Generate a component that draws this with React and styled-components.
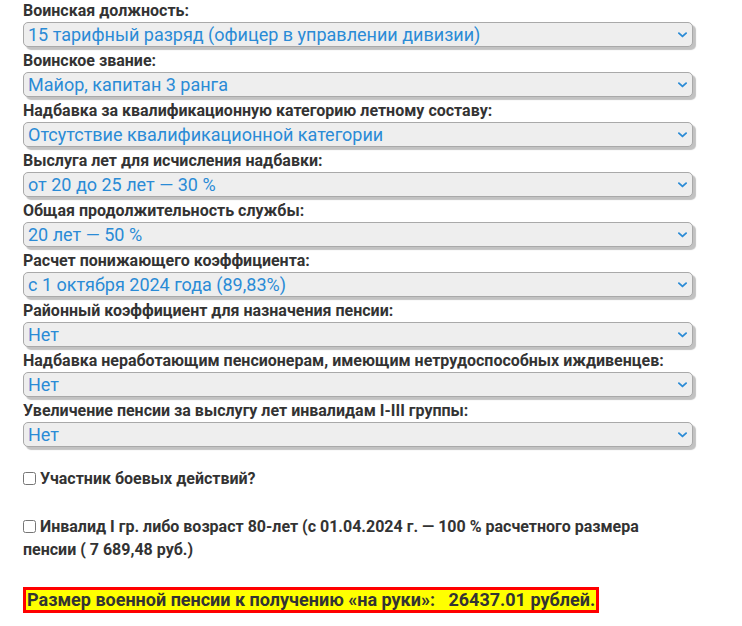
import React, { useState } from 'react';
import styled, { createGlobalStyle } from 'styled-components';

const GlobalStyle = createGlobalStyle`
  body {
    margin: 0;
    background: #fff;
    font-family: Roboto, "Liberation Sans", Arial, sans-serif;
    color: #333;
  }
`;

const fields = [
  {
    label: 'Воинская должность:',
    options: ['15 тарифный разряд (офицер в управлении дивизии)'],
  },
  { label: 'Воинское звание:', options: ['Майор, капитан 3 ранга'] },
  {
    label: 'Надбавка за квалификационную категорию летному составу:',
    options: ['Отсутствие квалификационной категории'],
  },
  {
    label: 'Выслуга лет для исчисления надбавки:',
    options: ['от 20 до 25 лет — 30 %'],
  },
  { label: 'Общая продолжительность службы:', options: ['20 лет — 50 %'] },
  {
    label: 'Расчет понижающего коэффициента:',
    options: ['с 1 октября 2024 года (89,83%)'],
  },
  {
    label: 'Районный коэффициент для назначения пенсии:',
    options: ['Нет'],
  },
  {
    label:
      'Надбавка неработающим пенсионерам, имеющим нетрудоспособных иждивенцев:',
    options: ['Нет'],
  },
  {
    label: 'Увеличение пенсии за выслугу лет инвалидам I-III группы:',
    options: ['Нет'],
  },
];

export default function App() {
  const [combat, setCombat] = useState(false);
  const [invalid, setInvalid] = useState(false);

  return (
    <>
      <GlobalStyle />
      <Form>
        {fields.map(field => (
          <Field key={field.label}>
            <Label>{field.label}</Label>
            <SelectWrap>
              <Select defaultValue={field.options[0]}>
                {field.options.map(opt => (
                  <option key={opt}>{opt}</option>
                ))}
              </Select>
              <Chevron viewBox="0 0 10 6" aria-hidden="true">
                <path
                  d="M1 1 L5 4.6 L9 1"
                  fill="none"
                  stroke="#2a8bd6"
                  strokeWidth="2"
                  strokeLinecap="round"
                  strokeLinejoin="round"
                />
              </Chevron>
            </SelectWrap>
          </Field>
        ))}

        <CheckLine first>
          <Checkbox
            type="checkbox"
            checked={combat}
            onChange={() => setCombat(!combat)}
          />
          Участник боевых действий?
        </CheckLine>

        <CheckLine>
          <Checkbox
            type="checkbox"
            checked={invalid}
            onChange={() => setInvalid(!invalid)}
          />
          Инвалид I гр. либо возраст 80-лет (с 01.04.2024 г. — 100 % расчетного
          размера пенсии ( 7 689,48 руб.)
        </CheckLine>

        <Result>
          Размер военной пенсии к получению «на руки»:&nbsp;&nbsp; 26437.01
          рублей.
        </Result>
      </Form>
    </>
  );
}

const Form = styled.form`
  width: 670px;
  padding: 0 0 0 23px;
`;

const Field = styled.div`
  margin-bottom: 3px;
`;

const Label = styled.div`
  font-size: 16px;
  font-weight: 700;
  line-height: 22px;
  color: #333;
`;

const SelectWrap = styled.div`
  position: relative;
  width: 670px;
`;

const Select = styled.select`
  appearance: none;
  display: block;
  width: 100%;
  height: 25px;
  margin: 0;
  padding: 0 24px 0 4px;
  border: 1px solid #a9a9a9;
  border-radius: 5px;
  background: #eee;
  box-shadow: 3px 3px 1px #c2c2c2;
  font-family: Roboto, "Liberation Sans", Arial, sans-serif;
  font-size: 18px;
  line-height: 23px;
  color: #2a8bd6;
  outline: none;
`;

const Chevron = styled.svg`
  position: absolute;
  right: 6px;
  top: 10px;
  width: 9px;
  height: 6px;
  pointer-events: none;
`;

const CheckLine = styled.label`
  display: block;
  max-width: 640px;
  margin-top: ${({ first }) => (first ? '20px' : '25px')};
  font-size: 16px;
  font-weight: 700;
  line-height: 23px;
  color: #333;
`;

const Checkbox = styled.input`
  width: 13px;
  height: 13px;
  margin: 0 4px 0 0;
  vertical-align: -1px;
`;

const Result = styled.div`
  display: inline-block;
  margin-top: 26px;
  padding: 0 1px 0 1px;
  border: 3px solid #ff0000;
  background: #ffff00;
  font-size: 18px;
  font-weight: 700;
  line-height: 20px;
  color: #333;
`;
